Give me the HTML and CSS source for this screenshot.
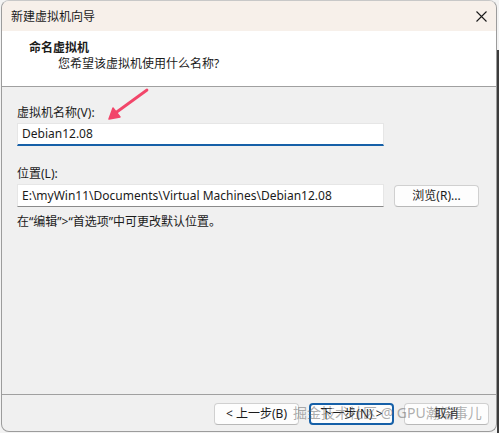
FILE: index.html
```html
<!DOCTYPE html>
<html lang="zh-CN">
<head>
<meta charset="utf-8">
<title>新建虚拟机向导</title>
<link rel="stylesheet" href="styles.css">
</head>
<body>
<div class="window">
  <div class="titlebar">
    <span class="title">新建虚拟机向导</span>
    <svg class="close" width="11" height="11" viewBox="0 0 11 11"><path d="M0.5 0.5L10.5 10.5M10.5 0.5L0.5 10.5" stroke="#1a1a1a" stroke-width="1.1" fill="none"/></svg>
  </div>
  <div class="header">
    <div class="h-title">命名虚拟机</div>
    <div class="h-sub">您希望该虚拟机使用什么名称?</div>
  </div>
  <div class="content">
    <label class="label">虚拟机名称(V):</label>
    <div class="field focused">Debian12.08</div>
    <label class="label loc">位置(L):</label>
    <div class="row">
      <div class="field">E:\myWin11\Documents\Virtual Machines\Debian12.08</div>
      <div class="btn browse">浏览(R)...</div>
    </div>
    <div class="hint">在“编辑”&gt;“首选项”中可更改默认位置。</div>
    <svg class="arrow" width="50" height="40" viewBox="0 0 50 40">
      <path d="M47 2 L14 26" stroke="#f2466a" stroke-width="2.8" stroke-linecap="round" fill="none"/>
      <path d="M9 31 L13 20 L20 29 Z" fill="#f2466a" stroke="#f2466a" stroke-width="1.5" stroke-linejoin="round"/>
    </svg>
  </div>
  <div class="footer">
    <div class="btn">&lt; 上一步(B)</div>
    <div class="btn primary">下一步(N) &gt;</div>
    <div class="btn">取消</div>
    <div class="watermark">掘金技术社区 @ GPU瀚端事儿</div>
  </div>
</div>
</body>
</html>
```
FILE: styles.css
```css
html, body {
  margin: 0;
  padding: 0;
}
body {
  width: 499px;
  height: 433px;
  background: linear-gradient(to bottom, #f3f3f3 0, #f3f3f3 50px, #3c3c3c 50px) right top / 2px 100% no-repeat, #f3f3f3;
  font-family: "Noto Sans", "Noto Sans CJK SC", sans-serif;
  font-size: 12px;
  color: #1b1b1b;
  overflow: hidden;
}
.window {
  position: relative;
  margin-left: 1px;
  width: 494px;
  height: 430px;
  border: 1px solid #9c9c9c;
  border-top-color: #c8c8c8;
  border-radius: 8px;
  background: #f0f0f0;
  display: flex;
  flex-direction: column;
  overflow: hidden;
}
.titlebar {
  height: 30px;
  flex: none;
  background: #f7f0ea;
  display: flex;
  align-items: center;
  justify-content: space-between;
  padding: 0 9px 0 9px;
}
.title {
  font-size: 12px;
  color: #1a1a1a;
}
.header {
  height: 56px;
  flex: none;
  background: #ffffff;
  border-bottom: 1px solid #a0a0a0;
  padding: 0 0 0 27px;
  box-sizing: border-box;
  display: flex;
  flex-direction: column;
}
.h-title {
  font-weight: bold;
  margin-top: 9px;
  line-height: 16px;
}
.h-sub {
  margin-left: 29px;
  line-height: 16px;
}
.content {
  position: relative;
  flex: 1;
  padding: 18px 0 0 15px;
  display: flex;
  flex-direction: column;
}
.label {
  line-height: 16px;
}
.loc {
  margin-top: 20px;
}
.field {
  flex: none;
  width: 367px;
  height: 23px;
  box-sizing: border-box;
  background: #ffffff;
  border: 1px solid #e6e6e6;
  border-bottom: 1px solid #8a8a8a;
  padding: 0 4px;
  line-height: 21px;
  margin-top: 2px;
  white-space: nowrap;
  overflow: hidden;
}
.field.focused {
  border-bottom: 2px solid #1660a8;
  line-height: 20px;
}
.row {
  display: flex;
  align-items: flex-end;
  gap: 10px;
}
.btn {
  flex: none;
  height: 22px;
  width: 85px;
  box-sizing: border-box;
  border: 1px solid #d0d0d0;
  border-bottom-color: #b8b8b8;
  border-radius: 4px;
  background: #fdfdfd;
  text-align: center;
  line-height: 20px;
}
.hint {
  margin-top: 7px;
  line-height: 16px;
}
.arrow {
  position: absolute;
  left: 98px;
  top: 1px;
}
.footer {
  position: relative;
  height: 37px;
  flex: none;
  border-top: 1px solid #a0a0a0;
  display: flex;
  align-items: flex-start;
  justify-content: flex-end;
  gap: 10px;
  padding: 8px 7px 0 0;
  box-sizing: border-box;
}
.btn.primary {
  border: 2px solid #1660a8;
  line-height: 18px;
}
.watermark {
  position: absolute;
  left: 291px;
  top: 8px;
  font-size: 14px;
  line-height: 20px;
  color: rgba(105, 105, 105, 0.55);
  white-space: nowrap;
  pointer-events: none;
}
```
